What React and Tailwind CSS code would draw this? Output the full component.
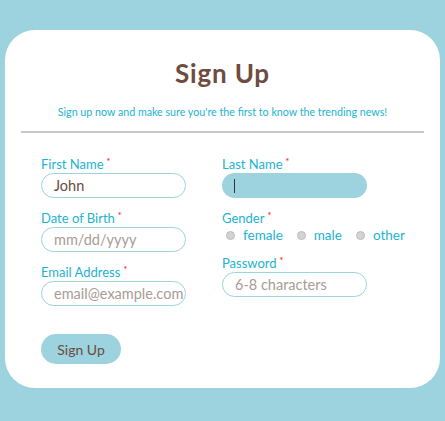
import React from "react";

const font = { fontFamily: "Lato, 'Open Sans', sans-serif" };

const Label = ({ children }) => (
  <div className="text-[13px] leading-[16px] text-[#22b3cf] h-[16px]">
    {children}
    <span className="text-[#ff0000] text-[9px] align-top ml-[3px] relative top-[-2px]">*</span>
  </div>
);

const Input = ({ value, placeholder }) => (
  <div className="mt-px h-[25px] w-[145px] rounded-full border border-[#9dd3de] flex items-center pl-[12px] overflow-hidden">
    {value ? (
      <span className="text-[14.5px] text-[#6b4a3e] whitespace-nowrap">{value}</span>
    ) : (
      <span className="text-[14.5px] text-[#a89c96] whitespace-nowrap">{placeholder}</span>
    )}
  </div>
);

const Radio = ({ label }) => (
  <div className="flex items-center gap-[8px]">
    <span className="w-[9px] h-[9px] rounded-full bg-[#d3d3d3] border border-[#bdbdbd]" />
    <span className="text-[13.5px] text-[#22b3cf]">{label}</span>
  </div>
);

const App = () => {
  return (
    <div className="w-[445px] h-[421px] bg-[#9dd3de] pt-[30px] pl-[5px]" style={font}>
      <div className="w-[435px] h-[358px] bg-white rounded-[30px] flex flex-col">
        <h1 className="mt-[28px] text-center text-[26px] tracking-[0.8px] leading-[31px] font-bold text-[#6e4c40]">
          Sign Up
        </h1>
        <p className="mt-[16px] text-center text-[10.7px] leading-[13px] text-[#22b3cf]">
          Sign up now and make sure you're the first to know the trending news!
        </p>
        <div className="mt-[13px] mx-[16px] h-[2px] bg-[#c8c8c8]" />

        <div className="pt-[23px] pl-[36px] flex gap-[36px]">
          {/* left column */}
          <div className="flex flex-col gap-[12px] w-[145px]">
            <div>
              <Label>First Name</Label>
              <Input value="John" />
            </div>
            <div>
              <Label>Date of Birth</Label>
              <Input placeholder="mm/dd/yyyy" />
            </div>
            <div>
              <Label>Email Address</Label>
              <Input placeholder="email@example.com" />
            </div>
            <button className="mt-[16px] w-[80px] h-[30px] rounded-full bg-[#9dd3de] text-[14px] text-[#6b4a3e]">
              Sign Up
            </button>
          </div>

          {/* right column */}
          <div className="flex flex-col gap-[12px]">
            <div>
              <Label>Last Name</Label>
              <div className="mt-px h-[25px] w-[145px] rounded-full bg-[#9dd3de] flex items-center px-[12px]">
                <span className="w-px h-[14px] bg-[#333]" />
              </div>
            </div>
            <div>
              <Label>Gender</Label>
              <div className="mt-px h-[16px] pl-[4px] flex items-center gap-[14px]">
                <Radio label="female" />
                <Radio label="male" />
                <Radio label="other" />
              </div>
            </div>
            <div>
              <Label>Password</Label>
              <Input placeholder="6-8 characters" />
            </div>
          </div>
        </div>
      </div>
    </div>
  );
};

export default App;
